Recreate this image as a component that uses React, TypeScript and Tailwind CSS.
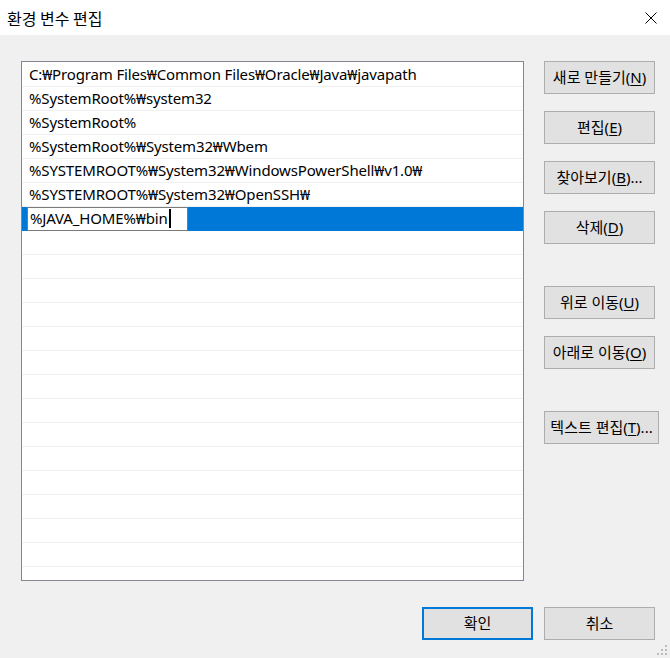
import React from 'react';

const paths = [
  'C:₩Program Files₩Common Files₩Oracle₩Java₩javapath',
  '%SystemRoot%₩system32',
  '%SystemRoot%',
  '%SystemRoot%₩System32₩Wbem',
  '%SYSTEMROOT%₩System32₩WindowsPowerShell₩v1.0₩',
  '%SYSTEMROOT%₩System32₩OpenSSH₩',
];

const font = { fontFamily: '"Noto Sans", "Noto Sans CJK KR", sans-serif' };

const SideButton: React.FC<{ label: string; keyChar: string; tail?: string; wide?: boolean }> = ({ label, keyChar, tail, wide }) => (
  <button
    className={`h-[33px] ${wide ? 'w-[115px]' : 'w-[111px]'} bg-[#e1e1e1] border border-[#adadad] text-[15px] text-black flex items-center justify-center whitespace-nowrap leading-none`}
  >
    {label}(<span className="underline underline-offset-2">{keyChar}</span>){tail}
  </button>
);

export default function App() {
  const emptyRows = Array.from({ length: 15 });
  return (
    <div className="w-[670px] h-[658px] flex flex-col bg-[#f0f0f0] relative overflow-hidden" style={font}>
      {/* title bar */}
      <div className="h-[35px] bg-white flex items-center justify-between pl-[7px] pr-[13px]">
        <span className="text-[16px] text-black" style={{ fontFamily: '"Noto Sans CJK KR", sans-serif' }}>환경 변수 편집</span>
        <svg width="12" height="12" viewBox="0 0 12 12" className="mt-[1px]">
          <path d="M0.5 0.5 L11.5 11.5 M11.5 0.5 L0.5 11.5" stroke="#000" strokeWidth="1" />
        </svg>
      </div>

      <div className="flex pt-[26px] pl-[21px] gap-[20px]">
        {/* list */}
        <div className="w-[503px] h-[520px] bg-white border border-[#828790] pt-[1px] overflow-hidden">
          {paths.map((p) => (
            <div key={p} className="h-[24px] border-b border-[#f0f0f0] pl-[7px] flex items-center text-[15px] tracking-[-0.15px] text-black whitespace-nowrap">
              {p}
            </div>
          ))}
          <div className="h-[24px] bg-[#0078d7] border-b border-[#0078d7] flex items-center pl-[5px]">
            <div className="w-[161px] h-[24px] bg-white border border-[#7a7a7a] pl-[2px] flex items-center text-[15px] tracking-[-0.15px] text-black">
              %JAVA_HOME%₩bin
              <span className="inline-block w-[2px] h-[19px] bg-black ml-[1px]" />
            </div>
          </div>
          {emptyRows.map((_, i) => (
            <div key={i} className="h-[24px] border-b border-[#f0f0f0]" />
          ))}
        </div>

        {/* side buttons */}
        <div className="flex flex-col">
          <div className="flex flex-col gap-[17px]">
            <SideButton label="새로 만들기" keyChar="N" />
            <SideButton label="편집" keyChar="E" />
            <SideButton label="찾아보기" keyChar="B" tail="..." />
            <SideButton label="삭제" keyChar="D" />
          </div>
          <div className="flex flex-col gap-[17px] mt-[42px]">
            <SideButton label="위로 이동" keyChar="U" />
            <SideButton label="아래로 이동" keyChar="O" />
          </div>
          <div className="mt-[42px]">
            <SideButton label="텍스트 편집" keyChar="T" tail="..." wide />
          </div>
        </div>
      </div>

      {/* bottom buttons */}
      <div className="flex justify-end gap-[11px] pr-[15px] mt-[26px]">
        <button className="w-[111px] h-[33px] bg-[#e1e1e1] border-2 border-[#0078d7] text-[15px] text-black">확인</button>
        <button className="w-[111px] h-[33px] bg-[#e1e1e1] border border-[#adadad] text-[15px] text-black">취소</button>
      </div>

      {/* size grip */}
      <svg width="12" height="12" viewBox="0 0 12 12" className="absolute right-[1px] bottom-[1px]">
        <rect x="8" y="0" width="2" height="2" fill="#bcbcbc" />
        <rect x="4" y="4" width="2" height="2" fill="#bcbcbc" />
        <rect x="8" y="4" width="2" height="2" fill="#bcbcbc" />
        <rect x="0" y="8" width="2" height="2" fill="#bcbcbc" />
        <rect x="4" y="8" width="2" height="2" fill="#bcbcbc" />
        <rect x="8" y="8" width="2" height="2" fill="#bcbcbc" />
      </svg>
    </div>
  );
}
